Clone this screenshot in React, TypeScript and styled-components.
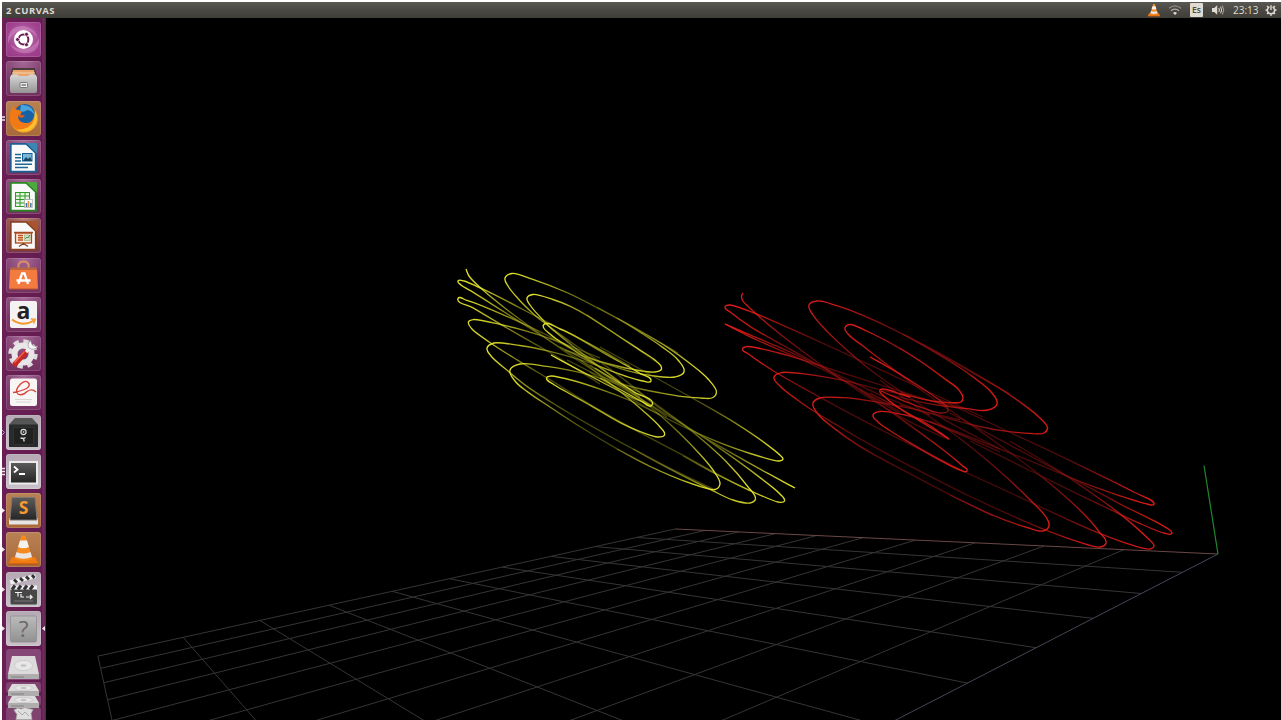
import React from "react";
import styled, { createGlobalStyle } from "styled-components";

const GlobalStyle = createGlobalStyle`
  html, body { margin: 0; background: #fff; }
  * { box-sizing: border-box; }
`;

const Screen = styled.div`
  width: 1281px;
  height: 720px;
  overflow: hidden;
  padding: 2px 0 0 2px;
  background: #fff;
  display: flex;
  flex-direction: column;
  font-family: "Open Sans", "Noto Sans", sans-serif;
`;

const TopBar = styled.header`
  height: 16px;
  flex: none;
  display: flex;
  align-items: center;
  justify-content: space-between;
  padding: 0 4px;
  background: linear-gradient(#5a5852, #4b4943 45%, #403e39);
  color: #dfdbd2;
`;

const WindowTitle = styled.span`
  font-size: 9.5px;
  line-height: 15px;
  font-weight: 700;
  letter-spacing: 0.45px;
  white-space: nowrap;
`;

const Tray = styled.div`
  display: flex;
  align-items: center;
  height: 16px;
`;

const TrayIcon = styled.svg<{ $gap: number }>`
  width: 14px;
  height: 14px;
  margin-right: ${(p) => p.$gap}px;
  display: block;
`;

const Keyboard = styled.span`
  width: 13px;
  height: 14px;
  margin-right: 8px;
  border-radius: 1px;
  background: #dfdbd2;
  color: #4a4943;
  font-size: 8.5px;
  font-weight: 600;
  line-height: 14px;
  text-align: center;
`;

const Clock = styled.span`
  width: 26px;
  margin-right: 5px;
  font-size: 10px;
  line-height: 15px;
  white-space: nowrap;
`;

const Desktop = styled.div`
  flex: 1;
  min-height: 0;
  display: flex;
  background: #000;
`;

const Launcher = styled.nav`
  width: 44px;
  flex: none;
  padding: 4px 0 0 0;
  display: flex;
  flex-direction: column;
  gap: 4.27px;
  overflow: hidden;
  background: linear-gradient(90deg, #6a1f55 0, #641c50 40px, #72305f 41px, #54204a 44px);
`;

const Slot = styled.div`
  height: 35px;
  flex: none;
  display: grid;
  grid-template-columns: 4px 35px 5px;
  align-items: center;
`;

const Tile = styled.div<{ $tone: string }>`
  height: 35px;
  border-radius: 3px;
  background: ${(p) => p.$tone};
  box-shadow: inset 0 0 0 1px rgba(255, 255, 255, 0.13);
`;

const Glyph = styled.svg`
  display: block;
  width: 35px;
  height: 35px;
  overflow: visible;
`;

const Marker = styled.svg`
  display: block;
  width: 4px;
  height: 9px;
`;

const DriveStack = styled.svg`
  display: block;
  flex: none;
  width: 35px;
  height: 72px;
  margin: -1px 0 0 4px;
`;

const Viewport = styled.main`
  flex: 1;
  min-width: 0;
`;

const Plot = styled.svg`
  display: block;
  width: 1235px;
  height: 702px;
`;

/* ---------- launcher icons ---------- */

const purple = "radial-gradient(circle at 50% 0, #a56a97, #7b3a6b 60%, #73305f)";
const orange = "linear-gradient(#b98155, #a8693a)";
const silver = "linear-gradient(#b5a9b4, #c9c1c9)";

const Cone = () => (
  <>
    <path d="M6 25 L29 25 L32.500 32 L2.500 32Z" fill="#ef7a12" />
    <path d="M15.500 3.500 H19.500 L26.500 27 Q17.500 31 8.500 27Z" fill="#f58a1f" />
    <path d="M14 8.500 H21 L23 15 Q17.500 17.500 12 15Z" fill="#f5f1ee" />
    <path d="M10.500 20 Q17.500 23 24.500 20 L26 25 Q17.500 28.500 9 25Z" fill="#e9e5e3" />
    <path d="M2.500 32 H32.500" stroke="#b6510b" strokeWidth="1" />
  </>
);

const Doc = ({ color, edge }: { color: string; edge: string }) => (
  <>
    <path d="M4 3 H31 V32.500 H4Z" fill={edge} opacity=".75" />
    <path d="M5 4 H20 L29.500 13 V31.500 H5Z" fill="#fafafa" stroke={edge} strokeWidth="1.300" />
    <path d="M20 3 H31 V13.500Z" fill={color} />
  </>
);

const icons: Record<string, React.ReactNode> = {
  dash: (
    <>
      <path d="M2 15 Q5 3 18 4 Q30 6 32 18 Q28 8 18 8 Q7 8 2 22Z M33 22 Q29 33 16 31 Q8 30 4 22 Q10 28 20 27 Q29 25 33 16Z" fill="#dda5d0" opacity=".4" />
      <circle cx="17.500" cy="17.500" r="9.500" fill="#fff" />
      <circle cx="17.500" cy="17.500" r="4.900" fill="none" stroke="#681b53" strokeWidth="2" />
      <g fill="#681b53" stroke="#fff" strokeWidth=".8">
        <circle cx="11.500" cy="17.500" r="2" />
        <circle cx="20.500" cy="12.300" r="2" />
        <circle cx="20.500" cy="22.700" r="2" />
      </g>
    </>
  ),
  files: (
    <>
      <path d="M6 7 H29 L31 17 H4Z" fill="#4a3a3a" />
      <path d="M7 9 H28 L29 17 H6Z" fill="#e9a46b" />
      <path d="M6 12 H29" stroke="#f7d2ac" strokeWidth="1" />
      <path d="M5.500 13.500 H11.500 L13 15 H22 L23.500 13.500 H29.500 L31 16 V30 Q31 32 29 32 H6 Q4 32 4 30 V16Z" fill="url(#metal)" />
      <rect x="14" y="21.500" width="7.500" height="5" rx="1" fill="#eee" stroke="#777" />
      <path d="M15.500 24 h4.500" stroke="#777" strokeWidth="1.500" />
    </>
  ),
  firefox: (
    <>
      <circle cx="17.800" cy="17.500" r="14" fill="url(#fox)" />
      <circle cx="18.800" cy="13.500" r="10.500" fill="#1762a5" />
      <path d="M15 4 Q27 3 29 15 Q26 9 21 9 Q18 12 14 10Z" fill="#49a3d8" />
      <path d="M4 13 Q5 7 8 6 Q8 9 13 9 L16 11 Q14 14 12 15 Q12 21 19 22 Q26 23 28 15 Q29 26 19 29 Q8 30 4 20Z" fill="#f27a16" />
      <path d="M29 9 Q34 20 26 27 Q19 33 11 29 Q25 28 28 19Z" fill="#ffc22d" />
      <path d="M12 15 Q13 12 19 15 Q16 18 13 16Z" fill="#e55b0b" />
    </>
  ),
  writer: (
    <>
      <Doc color="#3c87b1" edge="#175f94" />
      <path d="M9 14.500 h6 M9 17.700 h6 M9 20.900 h6 M9 24.200 h17 M9 27.400 h13" stroke="#1d6793" strokeWidth="1.500" />
      <rect x="16.500" y="13.500" width="9.500" height="7.500" fill="#7ab7d7" stroke="#175f94" />
      <path d="M17 21 l3-4 2 2 2-2 2 4Z" fill="#174664" />
    </>
  ),
  calc: (
    <>
      <Doc color="#4da83f" edge="#23851e" />
      <rect x="9.500" y="13.500" width="14" height="14" fill="#e7f5e3" stroke="#2f9a27" />
      <path d="M9.500 17 h14 M9.500 20.500 h14 M9.500 24 h14 M14 13.500 v14 M19 13.500 v14" stroke="#2f9a27" />
      <rect x="18.500" y="20.500" width="8" height="8" fill="#fff" stroke="#aaa" strokeWidth=".7" />
      <path d="M20.500 28 v-4" stroke="#3676b2" strokeWidth="1.600" />
      <path d="M22.500 28 v-6" stroke="#e29632" strokeWidth="1.600" />
      <path d="M24.800 28 v-4" stroke="#4a7aae" strokeWidth="1.600" />
    </>
  ),
  impress: (
    <>
      <Doc color="#a8552f" edge="#873f20" />
      <rect x="9.500" y="15" width="16" height="10" fill="#f9e8dd" stroke="#a84a20" strokeWidth="1.300" />
      <path d="M8 14.500 h19" stroke="#a84a20" strokeWidth="1.500" />
      <path d="M12 17.500 h5 M12 19.700 h5 M12 22 h5" stroke="#c4501b" strokeWidth="1.500" />
      <rect x="18.500" y="17" width="5.500" height="5.500" fill="#cfe3bb" stroke="#7b9f70" strokeWidth=".5" />
      <path d="M19 21 l2-2 1 1 2-3" stroke="#33803a" fill="none" strokeWidth=".8" />
      <path d="M17.500 25 v2 M13 28.500 l4.500-3 4.500 3" stroke="#873f20" fill="none" strokeWidth="1.300" />
    </>
  ),
  software: (
    <>
      <path d="M12.500 12 V7 Q13 3.500 17.500 3.500 Q22 3.500 22.500 7 V12" fill="none" stroke="#d98c6a" strokeWidth="2" />
      <path d="M4 12 H31 L32 31 H3Z" fill="#f47b40" />
      <path d="M4 12 H31 L30.500 9.500 H4.500Z" fill="#b9653f" />
      <path d="M3 31 H32" stroke="#ba5428" />
      <path d="M12.500 26 L16 15.500 H18.500 L22 26 M10.500 22.500 H24.500" stroke="#fff" strokeWidth="2.300" fill="none" />
    </>
  ),
  amazon: (
    <>
      <rect x="4" y="4" width="27" height="27" rx="2" fill="#f4f2f3" />
      <text x="17.400" y="21.500" textAnchor="middle" fontFamily="Open Sans, sans-serif" fontWeight="700" fontSize="23" fill="#222">a</text>
      <path d="M6 22.500 Q17 30.500 28 23.500" fill="none" stroke="#f19a2a" strokeWidth="1.900" />
      <path d="M25 22 L29.300 22.300 L27.500 26.500" fill="none" stroke="#f19a2a" strokeWidth="1.400" />
    </>
  ),
  settings: (
    <>
      <circle cx="17" cy="18" r="12.200" fill="none" stroke="#dedbdc" strokeWidth="5" strokeDasharray="5.200 4.380" />
      <circle cx="17" cy="18" r="8.500" fill="none" stroke="#e9e6e7" strokeWidth="6" />
      <path d="M9 28 L20 16" stroke="#c9281f" strokeWidth="5" strokeLinecap="round" />
      <path d="M9 26 L18 16" stroke="#ee6657" strokeWidth="1.500" strokeLinecap="round" />
      <path d="M20 16 L25.500 10.500" stroke="#f0efef" strokeWidth="3.500" />
      <path d="M24.500 4.500 Q20.500 8 23 12 Q28 15 32 10.500 L27.300 10 L25.800 8Z" fill="#f7f6f6" stroke="#888" strokeWidth=".6" />
    </>
  ),
  reader: (
    <>
      <rect x="4" y="3.500" width="27" height="27.500" rx="2.500" fill="#f8f5f5" />
      <path d="M7 17.500 Q25 14.500 23 8.500 Q20 4 14.500 9 Q8 16 12 19 Q16 21.500 21 16.500 Q26 13 30 17" fill="none" stroke="#d8453c" strokeWidth="1.400" />
      <path d="M9 24.500 h17 M10 27 h15" stroke="#d0cccc" strokeWidth=".8" />
    </>
  ),
  safe: (
    <>
      <path d="M9 3 H26 L32 9.500 V32 H3 V9.500Z" fill="#545656" />
      <rect x="3" y="9.500" width="29" height="22.500" rx="1" fill="#292b2b" />
      <rect x="7.500" y="12.500" width="20" height="17" fill="#202222" stroke="#303232" />
      <circle cx="17.500" cy="17" r="2.600" fill="#282828" stroke="#ddd" strokeWidth="1.100" />
      <circle cx="17.500" cy="17" r=".8" fill="#eee" />
      <path d="M14.500 23 l3 .5 2-1 M17.500 23.500 l.7 3" stroke="#ddd" strokeWidth="1.300" fill="none" />
    </>
  ),
  terminal: (
    <>
      <rect x="3" y="7" width="29" height="23.500" fill="#ecebec" />
      <rect x="5" y="9" width="25" height="19.500" fill="url(#dark)" />
      <path d="M8 12.500 L11.500 15.500 L8 18.500 M13 20 H19" fill="none" stroke="#fff" strokeWidth="1.800" />
    </>
  ),
  sublime: (
    <>
      <path d="M3 25 H32 V31.500 H3Z" fill="#e6e3e2" />
      <path d="M6 4.500 H29 L31 27 H4Z" fill="url(#dark)" stroke="#7a7775" strokeWidth="1" />
      <text x="17.500" y="21" textAnchor="middle" fontFamily="Open Sans, sans-serif" fontWeight="700" fontSize="17.500" fill="#f59a30">S</text>
    </>
  ),
  vlc: <Cone />,
  clapper: (
    <>
      <rect x="4.500" y="17" width="26.500" height="15.500" rx="1.500" fill="#474747" />
      <rect x="4.500" y="13.500" width="26.500" height="4" fill="#f0f0f0" />
      <path d="M6 17.500 l3-4 M12 17.500 l3-4 M18 17.500 l3-4 M24 17.500 l3-4" stroke="#333" strokeWidth="3" />
      <path d="M3.500 8.500 L29 2 L30.500 6 L5 12.500Z" fill="#f0f0f0" />
      <path d="M8 7.500 l3 3 M14 6 l3 3 M20 4.500 l3 3 M26 3 l2.500 3" stroke="#333" strokeWidth="2.800" />
      <path d="M9 20.500 h7 M12 20.500 v4 M15 22 v3 l3 0 M20 25 h6 l-2 -2 m2 2 l-2 2" stroke="#f1f1f1" strokeWidth="1.200" fill="none" />
      <path d="M8 29 h19" stroke="#777" strokeWidth="1" />
    </>
  ),
  unknown: (
    <>
      <rect x="4.500" y="5" width="26" height="26" rx="1.500" fill="url(#grey)" stroke="#888" strokeWidth=".7" />
      <text x="17.500" y="26" textAnchor="middle" fontFamily="Open Sans, sans-serif" fontSize="22.500" fill="#686868">?</text>
    </>
  ),
};

const launcherItems: { icon: string; tone: string; left?: "dot" | "two" | "three" | "hollow"; right?: boolean }[] = [
  { icon: "dash", tone: "radial-gradient(circle at 50% 45%, #c67eb9, #a34491 60%, #963785)" },
  { icon: "files", tone: purple },
  { icon: "firefox", tone: orange, left: "two" },
  { icon: "writer", tone: purple },
  { icon: "calc", tone: purple },
  { icon: "impress", tone: "radial-gradient(circle at 50% 0, #b57b70, #8e4b4f 50%, #783457)" },
  { icon: "software", tone: purple },
  { icon: "amazon", tone: purple },
  { icon: "settings", tone: purple },
  { icon: "reader", tone: purple },
  { icon: "safe", tone: silver, left: "hollow" },
  { icon: "terminal", tone: silver, left: "three" },
  { icon: "sublime", tone: orange, left: "dot" },
  { icon: "vlc", tone: orange, left: "dot" },
  { icon: "clapper", tone: silver, left: "dot" },
  { icon: "unknown", tone: silver, left: "dot", right: true },
];

const markerShapes = {
  dot: <path d="M0 2 L3 4.500 L0 7Z" fill="#f0e6ef" />,
  two: <path d="M0 3 h3 M0 6 h3" stroke="#f0e6ef" strokeWidth="1.600" />,
  three: <path d="M0 1.500 h3 M0 4.500 h3 M0 7.500 h3" stroke="#f0e6ef" strokeWidth="1.500" />,
  hollow: <path d="M0 2 L2.500 4.500 L0 7" stroke="#9c9ad2" fill="none" />,
};

const Drive = ({ y, h }: { y: number; h: number }) => (
  <g transform={`translate(0 ${y})`}>
    <path d={`M6 0 H29 L33 ${h - 5} H2Z`} fill="#dcdadb" />
    <ellipse cx="17.500" cy={(h - 4) / 2} rx="9" ry={h / 4.5} fill="#e8e7e7" stroke="#c8c6c7" strokeWidth=".8" />
    <ellipse cx="17.500" cy={(h - 4) / 2} rx="3" ry="1.200" fill="#c4c2c3" />
    <path d={`M2 ${h - 5} H33 V${h} H2Z`} fill="#b0adaf" />
    <path d={`M5 ${h - 2} H18`} stroke="#777" strokeWidth=".8" />
  </g>
);

/* ---------- perspective floor grid ---------- */

const project = (u: number, v: number): [number, number] => {
  const w = 1 + 0.0888 * u - 0.0677 * v;
  return [(1218 + 5.66 * u - 115.6 * v) / w, (554 + 44.48 * u - 20.43 * v) / w];
};

const gridLine = (a: [number, number], b: [number, number]) =>
  `M${a[0].toFixed(1)} ${a[1].toFixed(1)}L${b[0].toFixed(1)} ${b[1].toFixed(1)}`;

const steps = Array.from({ length: 10 }, (_, i) => i + 1);

/* ---------- curves: each loop is a run of points with a bright turning tip ---------- */

type Loop = { tip: number; pts: number[]; reach?: number };

const yellow: Loop[] = [
  { tip: 0, pts: [466, 269, 469, 276, 482, 290, 507, 310, 540, 334, 575, 359, 612, 382, 652, 406] },
  { tip: 4, pts: [590, 344, 537, 317, 490, 292, 464, 281, 458, 281, 461, 285, 473, 292, 493, 305, 525, 325, 570, 354, 620, 384, 667, 417] },
  { tip: 4, pts: [600, 363, 550, 336, 493, 310, 467, 300, 458, 298.5, 473, 308, 507, 328, 533, 343, 551, 353, 600, 384] },
  { tip: 5, pts: [600, 358, 550, 338, 523, 330, 500, 324, 474, 319.5, 468.5, 322, 472, 329, 490, 343, 517, 360, 546, 377, 590, 405, 633, 429, 683, 455, 717, 474, 750, 491] },
  { tip: 5, pts: [627, 377, 583, 360, 550, 351, 520, 345, 494, 343, 487, 348, 491, 356, 509, 372, 527, 387, 557, 406, 600, 431, 633, 449, 667, 467, 713, 489] },
  { tip: 4, pts: [640, 392, 583, 372, 547, 366, 520, 364, 510, 370, 515, 381, 527, 392, 547, 405, 580, 427, 617, 449, 650, 467, 687, 483, 715, 490] },
  { tip: 5, pts: [660, 415, 630, 400, 600, 389, 573, 380, 551, 376, 546.5, 378, 553, 384, 590, 405, 620, 423, 640, 432] },
  { tip: 5, pts: [678, 353, 630, 325, 597, 307.5, 567, 292, 533, 279, 512, 273.5, 505, 278, 508, 286, 517, 298, 533, 314, 547, 325, 573, 344, 610, 368, 650, 400] },
  { tip: 5, pts: [655, 361, 620, 337, 587, 315, 570, 306, 553, 299, 533, 294.5, 527, 298, 530, 305, 540, 317, 550, 328, 580, 352, 620, 382] },
  { tip: 3, pts: [630, 366, 590, 344, 560, 329, 543.5, 325, 550, 334, 573, 350, 600, 367, 640, 397] },
  { tip: 0, pts: [551, 355, 573, 367, 600, 381, 630, 397, 652, 406], reach: 180 },
  { tip: 5, pts: [597, 307.5, 617, 318, 640, 331, 667, 346.500, 690, 363, 708, 379, 716.5, 392, 713, 397.500, 703, 398.500, 683, 397, 660, 393, 627, 386, 600, 377, 567, 360] },
  { tip: 4, pts: [617, 318, 640, 332, 663, 347, 678, 360, 684, 372, 675, 377, 650, 376, 627, 371, 590, 359, 550, 338] },
  { tip: 4, pts: [587, 315, 620, 337, 640, 350, 656, 361, 661.5, 369, 655, 372, 633, 370, 600, 362, 565, 350] },
  { tip: 4, pts: [570, 333, 600, 351, 620, 362, 640, 373, 651, 381, 643, 381, 627, 377, 600, 367, 560, 347] },
  { tip: 5, pts: [600, 347, 640, 369, 685, 394, 733, 421, 766, 443, 783, 459, 779, 461, 750, 454, 717, 442, 683, 427, 640, 405, 590, 372] },
  { tip: 0, pts: [795, 488, 767, 473, 733, 454, 700, 435, 667, 415, 633, 394, 590, 365] },
  { tip: 4, pts: [640, 394, 667, 414, 710, 441, 760, 477, 780, 494, 784.5, 501, 778, 502, 750, 491, 717, 475, 683, 456] },
  { tip: 4, pts: [630, 386, 660, 407, 690, 429, 727, 461, 748, 486, 755.5, 499, 750, 503, 733, 500, 713, 491, 667, 468, 633, 449] },
  { tip: 6, pts: [590, 360, 610, 375, 640, 398, 667, 421, 693, 446, 713, 470, 720, 484, 715, 489.500, 687, 483, 650, 467, 617, 449] },
  { tip: 4, pts: [580, 360, 600, 375, 643, 410, 660, 427, 664.5, 435, 658, 437, 640, 432, 620, 423, 590, 405] },
  { tip: 2, pts: [595, 368, 635, 392, 652, 405, 640, 401, 600, 378], reach: 120 },
];

const red: Loop[] = [
  { tip: 0, pts: [743, 293, 741.5, 296, 743, 301, 757, 315, 777, 332, 810, 357, 843, 381, 877, 403, 910, 423, 950, 440] },
  { tip: 5, pts: [983, 417, 920, 388, 853, 357, 787, 327, 753, 312, 730, 305, 725, 307, 731, 313, 750, 327, 777, 342, 810, 360, 845, 381, 900, 414] },
  { tip: 0, pts: [725, 324, 750, 337, 777, 349, 810, 363, 850, 383, 900, 412] },
  { tip: 0, pts: [725, 324, 750, 335, 777, 346, 810, 361, 880, 396, 930, 415] },
  { tip: 5, pts: [948, 406, 890, 388, 843, 373, 803, 360, 777, 352, 748, 346.5, 742.5, 349, 748, 354, 773, 371, 803, 388, 843, 410, 893, 436, 967, 473] },
  { tip: 6, pts: [967, 409, 927, 400, 880, 390, 843, 380, 810, 374, 782, 372.5, 774, 377, 780, 386, 797, 400, 813, 411, 837, 425, 863, 441, 900, 461, 967, 495] },
  { tip: 5, pts: [960, 420, 910, 408, 873, 401, 843, 397, 820, 398, 813, 403, 818, 414, 833, 428, 857, 445, 880, 458, 905, 471, 950, 495, 993, 516] },
  { tip: 5, pts: [1000, 452, 950, 430, 925, 420, 903, 414, 880, 411.5, 873, 415, 878, 422, 890, 431, 917, 447, 937, 458, 960, 470] },
  { tip: 6, pts: [1010, 394, 983, 379, 945, 357, 903, 334, 870, 318, 837, 305, 817, 301, 809, 305, 813, 315, 827, 332, 850, 353, 870, 370, 897, 389, 943, 420, 1000, 449] },
  { tip: 5, pts: [958, 388, 945, 379, 925, 364, 900, 348, 870, 332, 850, 324.5, 845, 328, 849, 335, 863, 346, 890, 367, 917, 387, 950, 411] },
  { tip: 0, pts: [870, 357, 890, 368, 910, 380, 937, 398, 947, 407, 948, 411, 940, 413, 910, 404, 881, 391], reach: 170 },
  { tip: 0, pts: [910, 397, 880, 390, 885, 397, 897, 407, 923, 423, 949, 439], reach: 200 },
  { tip: 0, pts: [949, 439, 930, 425, 900, 409, 870, 393], reach: 100 },
  { tip: 5, pts: [903, 334, 940, 353, 983, 378, 1017, 399, 1040, 418, 1047.5, 428, 1044, 433, 1033, 434, 1000, 431, 967, 424, 900, 405] },
  { tip: 4, pts: [903, 334, 945, 358, 973, 376, 992, 393, 997, 404, 988, 410, 967, 409, 933, 405, 890, 395] },
  { tip: 4, pts: [900, 348, 925, 364, 945, 379, 958, 389, 963, 398, 961, 402, 955, 403, 933, 402, 900, 393] },
  { tip: 4, pts: [935, 397, 1005, 430, 1067, 459, 1133, 491, 1154, 504, 1147, 504, 1117, 495, 1080, 482, 1043, 466, 1000, 449, 930, 421] },
  { tip: 4, pts: [950, 413, 1010, 445, 1067, 476, 1117, 502, 1172, 533, 1164, 533, 1140, 524, 1107, 508, 1067, 489, 1033, 472, 970, 441] },
  { tip: 4, pts: [1010, 441, 1047, 463, 1080, 485, 1120, 513, 1147, 537, 1154, 546, 1150, 549, 1133, 546, 1100, 534, 1060, 516, 1030, 502, 1000, 488, 967, 473] },
  { tip: 5, pts: [950, 410, 1000, 445, 1043, 477, 1080, 509, 1100, 532, 1106, 543, 1100, 547, 1077, 542, 1045, 530, 1010, 515, 967, 495] },
  { tip: 6, pts: [880, 380, 920, 410, 960, 438, 993, 465, 1027, 496, 1046, 517, 1049, 526, 1043, 531, 1027, 528, 993, 516, 950, 495] },
  { tip: 4, pts: [860, 390, 890, 411, 940, 447, 962, 465, 967, 471, 960, 470, 933, 457, 900, 437] },
];

type Vec = [number, number];

const unit = (a: Vec, b: Vec): Vec => {
  const m = Math.hypot(b[0] - a[0], b[1] - a[1]);
  return m ? [(b[0] - a[0]) / m, (b[1] - a[1]) / m] : [0, 0];
};

const length = (a: Vec, b: Vec) => Math.hypot(b[0] - a[0], b[1] - a[1]);

/* ease gently bending points towards the chord of their neighbours */
const relax = (pts: Vec[]): Vec[] =>
  pts.map((p, i) => {
    if (i === 0 || i === pts.length - 1) return p;
    const a = pts[i - 1];
    const c = pts[i + 1];
    const u = unit(a, p);
    const w = unit(p, c);
    if (u[0] * w[0] + u[1] * w[1] < 0.975) return p;
    const n = unit(a, c);
    const off = (p[0] - a[0]) * -n[1] + (p[1] - a[1]) * n[0];
    return [p[0] + n[1] * off * 0.3, p[1] - n[0] * off * 0.3];
  });

const smooth = (flat: number[]) => {
  const raw: Vec[] = [];
  for (let i = 0; i < flat.length; i += 2) raw.push([flat[i], flat[i + 1]]);
  const pts = relax(raw);
  const at = (i: number) => pts[Math.max(0, Math.min(pts.length - 1, i))];
  const tangent = (i: number): Vec => {
    const u = unit(at(i - 1), at(i));
    const w = unit(at(i), at(i + 1));
    const m = Math.hypot(u[0] + w[0], u[1] + w[1]) || 1;
    return [(u[0] + w[0]) / m, (u[1] + w[1]) / m];
  };
  let d = `M${pts[0][0]} ${pts[0][1]}`;
  for (let i = 0; i < pts.length - 1; i++) {
    const b = at(i);
    const c = at(i + 1);
    const len = length(b, c);
    const before = length(at(i - 1), b) || len;
    const after = length(c, at(i + 2)) || len;
    const h1 = 0.35 * Math.min(len, before * 1.7);
    const h2 = 0.35 * Math.min(len, after * 1.7);
    const t1 = tangent(i);
    const t2 = tangent(i + 1);
    d += `C${[b[0] + t1[0] * h1, b[1] + t1[1] * h1, c[0] - t2[0] * h2, c[1] - t2[1] * h2, c[0], c[1]].map((v) => v.toFixed(1)).join(" ")}`;
  }
  return d;
};

const Curve = ({ id, loops, bright, dim, floor }: { id: string; loops: Loop[]; bright: string; dim: string; floor: number }) => (
  <g fill="none" strokeWidth="1.350">
    {loops.map((l, i) => (
      <React.Fragment key={i}>
        <radialGradient id={`${id}${i}`} gradientUnits="userSpaceOnUse" cx={l.pts[2 * l.tip]} cy={l.pts[2 * l.tip + 1]} r={l.reach ?? 105}>
          <stop offset="0" stopColor={bright} />
          <stop offset=".3" stopColor={bright} stopOpacity=".8" />
          <stop offset="1" stopColor={dim} stopOpacity={floor} />
        </radialGradient>
        <path d={smooth(l.pts)} stroke={`url(#${id}${i})`} />
      </React.Fragment>
    ))}
  </g>
);

export default function App() {
  return (
    <Screen>
      <GlobalStyle />
      <TopBar>
        <WindowTitle>2 CURVAS</WindowTitle>
        <Tray>
          <TrayIcon $gap={7} viewBox="1 1 33 33">
            <Cone />
          </TrayIcon>
          <TrayIcon $gap={8} viewBox="0 0 14 14" fill="none" stroke="#8f8c85" strokeWidth="1.100">
            <path d="M1 5.300 Q7 .5 13 5.300" />
            <path d="M3 7.700 Q7 4.500 11 7.700" stroke="#b5b1a9" />
            <path d="M5 10 Q7 8.200 9 10 L7 12Z" fill="#dfdbd2" stroke="none" />
          </TrayIcon>
          <Keyboard>Es</Keyboard>
          <TrayIcon $gap={8} viewBox="0 0 14 14" fill="none" stroke="#dfdbd2" strokeWidth="1">
            <path d="M1 5 H3.200 L6.200 2.300 V11.700 L3.200 9 H1Z" fill="#dfdbd2" stroke="none" />
            <path d="M7.800 5 Q9 7 7.800 9 M9.600 3.700 Q11.600 7 9.600 10.300" />
            <path d="M11.300 2.500 Q14.300 7 11.300 11.500" stroke="#aaa79f" />
          </TrayIcon>
          <Clock>23:13</Clock>
          <TrayIcon $gap={-1} viewBox="0 0 14 14" fill="none" stroke="#dfdbd2">
            <path d="M5.400 4 A3.600 3.600 0 1 0 8.600 4" strokeWidth="1.500" />
            <path d="M7 2.200 V7" strokeWidth="1.400" />
            <path d="M1.500 7 H3 M11 7 H12.500 M3.100 3.100 L4.200 4.200 M10.900 3.100 L9.800 4.200 M3.100 10.900 L4.200 9.800 M10.900 10.900 L9.800 9.800 M7 11.200 V12.700" strokeWidth="1.700" />
          </TrayIcon>
        </Tray>
      </TopBar>
      <Desktop>
        <Launcher>
          {launcherItems.map((it) => (
            <Slot key={it.icon}>
              <Marker viewBox="0 0 4 9">{it.left && markerShapes[it.left]}</Marker>
              <Tile $tone={it.tone}>
                <Glyph viewBox="0 0 35 35">
                  <defs>
                    <linearGradient id="metal" x2="0" y2="1">
                      <stop stopColor="#d8d7d7" />
                      <stop offset="1" stopColor="#959393" />
                    </linearGradient>
                    <linearGradient id="dark" x2="0" y2="1">
                      <stop stopColor="#5b5b5b" />
                      <stop offset="1" stopColor="#252525" />
                    </linearGradient>
                    <linearGradient id="grey" x2="0" y2="1">
                      <stop stopColor="#bdbcbd" />
                      <stop offset="1" stopColor="#929192" />
                    </linearGradient>
                    <linearGradient id="fox" x2="1" y2="1">
                      <stop stopColor="#e2590e" />
                      <stop offset="1" stopColor="#ffbd2b" />
                    </linearGradient>
                  </defs>
                  {icons[it.icon]}
                </Glyph>
              </Tile>
              {it.right && (
                <Marker viewBox="0 0 4 9">
                  <path d="M4 2 L1 4.500 L4 7Z" fill="#f0e6ef" />
                </Marker>
              )}
            </Slot>
          ))}
          <DriveStack viewBox="0 0 35 72">
            <rect width="35" height="31" rx="3" fill="#854776" />
            <rect y="33" width="35" height="11" rx="3" fill="#80436f" />
            <rect y="46" width="35" height="11" rx="3" fill="#80436f" />
            <rect y="58" width="35" height="14" rx="3" fill="#80436f" />
            <Drive y={7} h={23} />
            <Drive y={35} h={12} />
            <Drive y={47} h={12} />
            <path d="M8 61 l4-2 3 1 4-1.500 3 1 5 1 -2 4 1 6 H10 l1-5Z" fill="#dedede" stroke="#aaa" strokeWidth=".8" />
            <path d="M12 62 l4 4 3-3 4 4" stroke="#aaa" fill="none" />
          </DriveStack>
        </Launcher>
        <Viewport>
          <Plot viewBox="46 18 1235 702">
            <g fill="none" stroke="#353535" strokeWidth="1">
              {steps.map((i) => (
                <path key={i} d={gridLine(project(i, 0), project(i, 10)) + gridLine(project(0, i), project(10, i))} />
              ))}
              <path d={gridLine(project(0, 0), project(10, 0))} stroke="#6b4747" />
              <path d={gridLine(project(0, 0), project(0, 10))} stroke="#464658" />
              <path d="M1204 465.500 L1218 554" stroke="#1e8a2b" strokeWidth="1.200" />
            </g>
            <Curve id="y" loops={yellow} bright="#e3e32c" dim="#a0a01c" floor={0.42} />
            <Curve id="r" loops={red} bright="#e01c17" dim="#981313" floor={0.5} />
          </Plot>
        </Viewport>
      </Desktop>
    </Screen>
  );
}
